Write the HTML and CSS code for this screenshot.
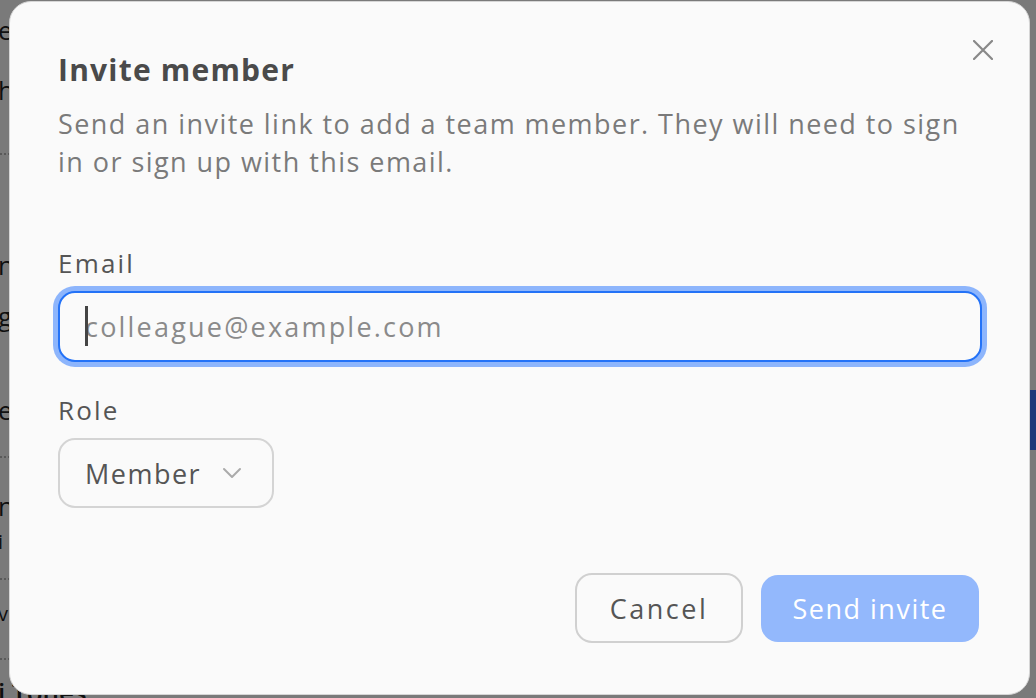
FILE: index.html
```html
<!DOCTYPE html>
<html lang="en">
<head>
<meta charset="utf-8">
<title>Invite member</title>
<link rel="stylesheet" href="styles.css">
</head>
<body>
<div class="page">
  <div class="page-main">
    <div class="row r1">eh</div>
    <div class="row r2">h</div>
    <div class="divider d1"></div>
    <div class="row r3">n</div>
    <div class="row r4">g</div>
    <div class="row r5">e</div>
    <div class="divider d2"></div>
    <div class="row r6">n</div>
    <div class="row r7">i</div>
    <div class="divider d3"></div>
    <div class="row r8">vi</div>
    <div class="divider d4"></div>
    <div class="row r9">i Tones</div>
  </div>
  <div class="page-side"><div class="side-btn"></div></div>
</div>
<div class="backdrop"></div>
<div class="modal" role="dialog" aria-labelledby="modal-title">
  <button class="close" aria-label="Close">
    <svg width="20" height="20" viewBox="0 0 20 20"><path d="M1 1L19 19M19 1L1 19" stroke="#888" stroke-width="2.2" stroke-linecap="round" fill="none"/></svg>
  </button>
  <h2 id="modal-title" class="title">Invite member</h2>
  <p class="desc">Send an invite link to add a team member. They will need to sign in or sign up with this email.</p>
  <label class="label label-email" for="email">Email</label>
  <div class="input-wrap">
    <input id="email" class="input" type="email" placeholder="colleague@example.com">
    <span class="caret"></span>
  </div>
  <div class="label label-role">Role</div>
  <button class="select">
    <span>Member</span>
    <svg width="20" height="12" viewBox="0 0 20 12"><path d="M2 2L10 10L18 2" stroke="#aaa" stroke-width="2" fill="none" stroke-linecap="round" stroke-linejoin="round"/></svg>
  </button>
  <div class="actions">
    <button class="btn btn-cancel">Cancel</button>
    <button class="btn btn-send">Send invite</button>
  </div>
</div>
</body>
</html>
```
FILE: styles.css
```css
html, body {
  margin: 0;
  padding: 0;
  width: 1036px;
  height: 698px;
  overflow: hidden;
}
body {
  background: #ffffff;
  font-family: "Open Sans", "Liberation Sans", sans-serif;
  position: relative;
}
.page {
  display: flex;
  height: 698px;
  overflow: hidden;
}
.page-main {
  flex: 1;
  display: flex;
  flex-direction: column;
  font-size: 26px;
  color: #222;
  overflow: hidden;
}
.row {
  height: 36px;
  line-height: 36px;
  margin-left: -2px;
  flex-shrink: 0;
}
.r1 { margin-top: 12px; }
.r2 { margin-top: 24px; }
.divider { border-top: 2px dotted #bbb; height: 0; flex-shrink: 0; }
.d1 { margin-top: 45px; }
.r3 { margin-top: 92px; }
.r4 { margin-top: 15px; }
.r5 { margin-top: 58px; }
.d2 { margin-top: 28px; }
.r6 { margin-top: 30px; }
.r7 { margin-top: 0; font-size: 20px; }
.d3 { margin-top: 18px; }
.r8 { margin-top: 16px; font-size: 20px; }
.d4 { margin-top: 26px; }
.r9 { margin-top: 14px; font-weight: 600; }
.page-side {
  width: 6px;
}
.side-btn {
  margin-top: 390px;
  height: 60px;
  background: #3a74ff;
}
.backdrop {
  position: absolute;
  inset: 0;
  background: rgba(0, 0, 0, 0.52);
}
.modal {
  position: absolute;
  left: 9px;
  top: 1px;
  width: 1021px;
  height: 694px;
  box-sizing: border-box;
  background: #fafafa;
  border: 1px solid #d6d6d6;
  border-radius: 22px;
  padding: 48px 48px 0;
  display: flex;
  flex-direction: column;
  align-items: flex-start;
}
.close {
  position: absolute;
  top: 38px;
  right: 36px;
  width: 20px;
  height: 20px;
  padding: 0;
  border: 0;
  background: none;
  display: flex;
}
.title {
  margin: 0;
  font-size: 30px;
  line-height: 40px;
  font-weight: 700;
  letter-spacing: 1.2px;
  color: #4a4a4a;
}
.desc {
  margin: 15px 0 0;
  font-size: 27px;
  line-height: 38px;
  letter-spacing: 1.45px;
  color: #7a7a7a;
  width: 923px;
}
.label {
  font-size: 26px;
  line-height: 32px;
  font-weight: 500;
  letter-spacing: 2.2px;
  color: #555;
}
.label-email { margin-top: 66px; }
.input-wrap {
  position: relative;
  margin-top: 12px;
  width: 924px;
}
.input {
  box-sizing: border-box;
  width: 100%;
  height: 71px;
  border: 2px solid #2372f7;
  border-radius: 17px;
  box-shadow: 0 0 0 5px #8db5fc;
  background: #fafafa;
  padding: 0 25px;
  font-family: inherit;
  font-size: 27px;
  letter-spacing: 2.2px;
  color: #444;
  outline: none;
}
.input::placeholder { color: #8a8a8a; }
.caret {
  position: absolute;
  left: 27px;
  top: 15px;
  width: 3px;
  height: 40px;
  background: #444;
}
.label-role { margin-top: 32px; }
.select {
  margin-top: 12px;
  box-sizing: border-box;
  width: 216px;
  height: 70px;
  border: 2px solid #d4d4d4;
  border-radius: 17px;
  background: #fafafa;
  padding: 0 30px 0 25px;
  display: flex;
  align-items: center;
  justify-content: space-between;
  font-family: inherit;
  font-size: 27px;
  letter-spacing: 1.5px;
  color: #555;
}
.actions {
  align-self: stretch;
  margin-top: 65px;
  display: flex;
  justify-content: flex-end;
  align-items: center;
  gap: 18px;
  padding-right: 2px;
}
.btn {
  box-sizing: border-box;
  border-radius: 17px;
  font-family: inherit;
  font-size: 27px;
  font-weight: 500;
  cursor: pointer;
}
.btn-cancel {
  width: 168px;
  height: 70px;
  border: 2px solid #d0d0d0;
  background: #fafafa;
  color: #555;
  letter-spacing: 2.5px;
}
.btn-send {
  width: 218px;
  height: 67px;
  border: 0;
  background: #93b8fc;
  color: #fff;
  letter-spacing: 1.5px;
}
```
